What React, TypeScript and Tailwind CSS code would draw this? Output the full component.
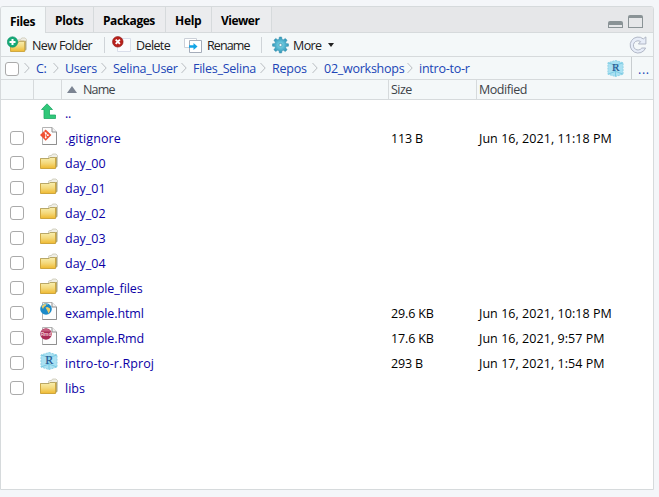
import type { ReactNode } from "react";

const font = "font-['Open_Sans','Noto_Sans',sans-serif]";

function Folder({ small = false }: { small?: boolean }) {
  return (
    <svg width={small ? 17 : 18} height={small ? 15 : 16} viewBox="0 0 18 16" className="block">
      <defs>
        <linearGradient id="folderFace" x1="0" y1="0" x2="0" y2="1">
          <stop offset="0" stopColor="#f8efb0" />
          <stop offset=".5" stopColor="#f4d97c" />
          <stop offset="1" stopColor="#efb930" />
        </linearGradient>
      </defs>
      <path d="M8.500 5V3.200L10 2.500h1.500L12.500 1h3.500l1.500 1.500V13l-1 1.500H9z" fill="#efeee6" stroke="#c9c6b2" strokeWidth=".8" />
      <path d="M16.500 4v10" stroke="#a99d62" strokeWidth=".9" />
      <path d="M.5 5.500h8.500l1-1h5.500v11H.5z" fill="url(#folderFace)" stroke="#c99f32" strokeWidth=".9" />
      <path d="M.5 5.500h8.500l1-1h5.500" fill="none" stroke="#b5a76c" strokeWidth=".9" />
    </svg>
  );
}

function Project({ size = 18 }: { size?: number }) {
  return (
    <svg width={size} height={size} viewBox="0 0 18 18" className="block">
      <path d="M9 .5 17 3v12l-8 2.500L1 15V3z" fill="#a9e0f2" />
      <path d="m1 3 8 2.500L17 3M9 5.500V17.500M1 15l8-3 8 3" fill="none" stroke="#72c6e0" strokeWidth=".9" />
      <path d="M9 .5 17 3v12l-8 2.500L1 15V3z" fill="none" stroke="#8bd1e6" strokeDasharray="2 1" />
      <text x="9.300" y="12" textAnchor="middle" fontFamily="Liberation Serif, serif" fontSize="12" fill="#23558f" stroke="#23558f" strokeWidth=".2">R</text>
    </svg>
  );
}

function Page({ children }: { children: ReactNode }) {
  return (
    <svg width="18" height="18" viewBox="0 0 18 18" className="block">
      <path d="M2.500.5h9.500l4.500 4.500v12.500h-14z" fill="#fdfdfd" stroke="#b4b4b4" />
      <path d="M12 .5V5h4.500" fill="#f3f3f3" stroke="#8f8f8f" />
      <path d="M16.500 5v12.500h-14" fill="none" stroke="#8f8f8f" />
      {children}
    </svg>
  );
}

function GitFile() {
  return (
    <Page>
      <path d="m5.700 2.400 5.700 5.700-5.700 5.700L0 8.100z" fill="#f05133" />
      <path d="m4.300 4.800 3.400 3.300M5.700 6.200v4.300" stroke="#fff" strokeWidth=".8" />
      <circle cx="5.700" cy="10.500" r=".9" fill="#fff" />
      <circle cx="7.900" cy="8.200" r=".9" fill="#fff" />
      <circle cx="5.700" cy="6.200" r=".9" fill="#fff" />
    </Page>
  );
}

function HtmlFile() {
  return (
    <Page>
      <circle cx="6" cy="7" r="5.800" fill="#1c8ac8" />
      <path d="M1.500 4.500 3.500 2 6.500 1.500 6 3.500 4 5 3 7zM5.500 5.500l2-.5 2.500 1.500v2.500L8.500 11.500 7.500 9z" fill="#eccb65" />
      <path d="M2 3.500a5 5 0 0 1 6-1" fill="none" stroke="#79bde1" strokeWidth=".7" />
    </Page>
  );
}

function RmdFile() {
  return (
    <Page>
      <circle cx="6" cy="7" r="5.800" fill="#a92b55" />
      <path d="M1 4.500a5.800 5.800 0 0 1 10 0z" fill="#c55f7f" />
      <text x="6" y="8.700" textAnchor="middle" fontFamily="Liberation Sans, sans-serif" fontWeight="700" fontSize="4.800" fill="#f2cbd7">Rmd</text>
    </Page>
  );
}

function UpArrow() {
  return (
    <svg width="18" height="17" viewBox="0 0 18 17" className="block">
      <path d="M7 .8 1.500 6.500H4v9h11.500v-3.500h-6V6.500h3z" fill="#30c879" stroke="#1fa867" strokeWidth=".8" />
    </svg>
  );
}

function Refresh() {
  return (
    <svg width="18" height="18" viewBox="0 0 18 18" className="block">
      <path d="M14.300 2.900A8 8 0 1 0 16.600 12h-3.800a4.600 4.600 0 1 1-1.200-6.400L9.400 8h7.500V.9z" fill="#e7edf8" stroke="#a9b0bf" strokeWidth=".9" />
    </svg>
  );
}

function Gear() {
  return (
    <svg width="17" height="18" viewBox="0 0 18 18" className="block">
      <defs>
        <radialGradient id="gearBlue">
          <stop offset="0" stopColor="#82dced" />
          <stop offset="1" stopColor="#3296b8" />
        </radialGradient>
      </defs>
      <path d="m7.300 3 .5-2.500h2.400l.5 2.500 1.200.5 2.200-1.500 1.900 1.900-1.500 2.200.5 1.200 2.500.5v2.400l-2.500.5-.5 1.200 1.500 2.200-1.900 1.900-2.200-1.500-1.200.5-.5 2.500H7.800L7.300 15l-1.200-.5L3.900 16 2 14.100l1.500-2.200-.5-1.200-2.500-.5V7.800L3 7.300l.5-1.200L2 3.900 3.900 2l2.200 1.500z" fill="url(#gearBlue)" stroke="#3d91ad" strokeWidth=".5" />
      <circle cx="9" cy="9" r="1.700" fill="#f4f8f9" stroke="#4193ad" strokeWidth=".8" />
    </svg>
  );
}

function Checkbox() {
  return <input type="checkbox" className="block size-[14px] shrink-0 appearance-none rounded-[3px] border border-[#aaaaaa] bg-white" />;
}

function Chevron() {
  return (
    <svg width="6" height="12" viewBox="0 0 6 12" className="shrink-0">
      <path d="m.5 1 4.700 5-4.700 5" fill="none" stroke="#b9bdc1" />
    </svg>
  );
}

const tabs = [
  { name: "Files", box: "w-[45px] h-[26px] bg-[#f4f8f9]", spacing: "tracking-[-0.35px]" },
  { name: "Plots", box: "w-[48px] h-[25px] bg-[#ebecee]", spacing: "tracking-[-0.3px]" },
  { name: "Packages", box: "w-[72px] h-[25px] bg-[#ebecee]", spacing: "tracking-[-0.45px]" },
  { name: "Help", box: "w-[46px] h-[25px] bg-[#ebecee]", spacing: "tracking-[-0.3px]" },
  { name: "Viewer", box: "w-[60px] h-[25px] bg-[#ebecee]", spacing: "tracking-[-0.5px]" },
];

const crumbs = [
  { name: "C:", box: "w-[29px]" },
  { name: "Users", box: "w-[48px]" },
  { name: "Selina_User", box: "w-[80px]" },
  { name: "Files_Selina", box: "w-[79px]" },
  { name: "Repos", box: "w-[52px]" },
  { name: "02_workshops", box: "w-[95px]" },
  { name: "intro-to-r", box: "w-[60px]" },
];

const files: { name: string; icon: ReactNode; spacing: string; size?: string; date?: string }[] = [
  { name: "..", icon: <UpArrow />, spacing: "tracking-[-0.2px]" },
  { name: ".gitignore", icon: <GitFile />, spacing: "tracking-[0.1px]", size: "113 B", date: "Jun 16, 2021, 11:18 PM" },
  { name: "day_00", icon: <Folder />, spacing: "tracking-normal" },
  { name: "day_01", icon: <Folder />, spacing: "tracking-normal" },
  { name: "day_02", icon: <Folder />, spacing: "tracking-normal" },
  { name: "day_03", icon: <Folder />, spacing: "tracking-normal" },
  { name: "day_04", icon: <Folder />, spacing: "tracking-normal" },
  { name: "example_files", icon: <Folder />, spacing: "tracking-[-0.1px]" },
  { name: "example.html", icon: <HtmlFile />, spacing: "tracking-[-0.1px]", size: "29.6 KB", date: "Jun 16, 2021, 10:18 PM" },
  { name: "example.Rmd", icon: <RmdFile />, spacing: "tracking-[-0.1px]", size: "17.6 KB", date: "Jun 16, 2021, 9:57 PM" },
  { name: "intro-to-r.Rproj", icon: <Project />, spacing: "tracking-[0.1px]", size: "293 B", date: "Jun 17, 2021, 1:54 PM" },
  { name: "libs", icon: <Folder />, spacing: "tracking-normal" },
];

export default function App() {
  return (
    <main className={`h-[497px] w-[659px] bg-[#f4f6f9] pt-[6px] text-[12.5px] leading-[18px] text-black ${font}`}>
      <section className="flex h-[484px] w-[654px] flex-col overflow-hidden rounded-t-[3px] border border-[#d6dadc] bg-white">
        <header className="flex h-[26px] shrink-0 border-b border-[#d6dadc] bg-[#e6e7e9]">
          {tabs.map((tab) => (
            <button key={tab.name} className={`flex shrink-0 items-center border-r border-[#d6dadc] pt-[3px] pl-[9px] text-left text-[12px] font-bold ${tab.box} ${tab.spacing}`}>{tab.name}</button>
          ))}
          <div className="ml-auto flex gap-[5px] pt-[8px] pr-[10px]">
            <span className="mt-[6px] h-[7px] w-[15px] rounded-t-[2px] border border-t-[4px] border-[#8a9396]" />
            <span className="h-[13px] w-[15px] rounded-t-[2px] border border-t-[3px] border-[#8a9396]" />
          </div>
        </header>
        <div className="flex h-[24px] shrink-0 items-center border-b border-[#d6dadc] bg-[#f4f8f9] pl-[6px] text-[#202020]">
          <button className="flex w-[97px] items-center">
            <svg width="20" height="17" viewBox="0 0 20 17" className="mr-[5px]">
              <g transform="translate(3 1)"><Folder small /></g>
              <circle cx="5.500" cy="6" r="5.200" fill="#18aa78" stroke="#079265" strokeWidth=".6" />
              <path d="M5.500 3v6M2.500 6h6" stroke="#fff" strokeWidth="2" />
            </svg>
            <span className="pt-[2px] tracking-[-0.62px]">New Folder</span>
          </button>
          <i className="mr-[7px] h-[16px] w-px bg-[#cfd4d8]" />
          <button className="flex w-[72px] items-center">
            <svg width="20" height="17" viewBox="0 0 20 17" className="mr-[4px]">
              <path d="M5.500 2.500h13v13h-13z" fill="#fbfcfe" stroke="#d9deea" />
              <circle cx="5.800" cy="5.800" r="5.300" fill="#b8211c" stroke="#8d1714" strokeWidth=".6" />
              <path d="m3.700 3.700 4.200 4.200m0-4.200L3.700 7.900" stroke="#fff" strokeWidth="1.900" />
            </svg>
            <span className="pt-[2px] tracking-[-0.6px]">Delete</span>
          </button>
          <button className="flex w-[77px] items-center">
            <svg width="18" height="16" viewBox="0 0 18 16" className="mr-[5px]">
              <path d="M.5 1.500h12v9H.5z" fill="#fff" stroke="#cbd0d8" />
              <path d="M5.500 3.500h12v12h-12z" fill="#fff" stroke="#a5adba" />
              <path d="M5 9.500h5" stroke="#12a4e6" strokeWidth="2.600" />
              <path d="m9.500 6 4 3.500-4 3.500z" fill="#12a4e6" />
            </svg>
            <span className="pt-[2px] tracking-[-0.9px]">Rename</span>
          </button>
          <i className="mr-[10px] h-[16px] w-px bg-[#cfd4d8]" />
          <button className="flex items-center">
            <Gear />
            <span className="ml-[4px] w-[31px] pt-[2px] text-left tracking-[-0.6px]">More</span>
            <i className="mt-[1px] ml-[4px] border-x-[3.5px] border-t-[4px] border-x-transparent border-t-[#222]" />
          </button>
          <button className="mr-[6px] ml-auto"><Refresh /></button>
        </div>
        <nav className="flex h-[23px] shrink-0 items-center border-b border-[#d6dadc] bg-[#f4f8f9] pl-[4px] text-[#2045b6]">
          <span className="pt-[2px]"><Checkbox /></span>
          <div className="ml-[5px] flex items-center">
            {crumbs.map((crumb) => (
              <span key={crumb.name} className={`flex shrink-0 items-center whitespace-nowrap ${crumb.box}`}>
                <Chevron />
                <a className="ml-[6px] pt-px tracking-[-0.25px]">{crumb.name}</a>
              </span>
            ))}
          </div>
          <div className="ml-auto flex h-full items-center">
            <Project size={17} />
            <i className="ml-[7px] h-full w-px bg-[#c8cdd0]" />
            <a className="w-[21px] pt-[4px] pl-[6px] tracking-[0.6px]">...</a>
          </div>
        </nav>
        <div className="flex h-[20px] shrink-0 items-center border-b border-[#d6dadc] bg-[#f4f8f9] text-[#3d4348]">
          <span className="h-full w-[33px] border-r border-[#d6dadc]" />
          <span className="h-full w-[28px] border-r border-[#d6dadc]" />
          <span className="flex h-full w-[327px] items-center border-r border-[#d6dadc] pl-[5px] tracking-[-0.8px]">
            <i className="mr-[6px] border-x-[5.5px] border-b-[7px] border-x-transparent border-b-[#7b8492]" />
            Name
          </span>
          <span className="flex h-full w-[88px] items-center border-r border-[#d6dadc] pl-[2px] tracking-[-0.5px]">Size</span>
          <span className="pl-[2px] tracking-[-0.45px]">Modified</span>
        </div>
        <div>
          {files.map((file, index) => (
            <div key={file.name} className="flex h-[25px] items-center">
              <span className="w-[39px] pl-[9px]">{index > 0 && <Checkbox />}</span>
              <span className="w-[25px] pb-[3px]">{file.icon}</span>
              <a className={`w-[326px] pt-[2px] text-[#0a00a5] ${file.spacing}`}>{file.name}</a>
              <span className="w-[88px] pt-[2px] tracking-[-0.15px]">{file.size}</span>
              <span className="pt-[2px] tracking-[0.05px]">{file.date}</span>
            </div>
          ))}
        </div>
      </section>
    </main>
  );
}
